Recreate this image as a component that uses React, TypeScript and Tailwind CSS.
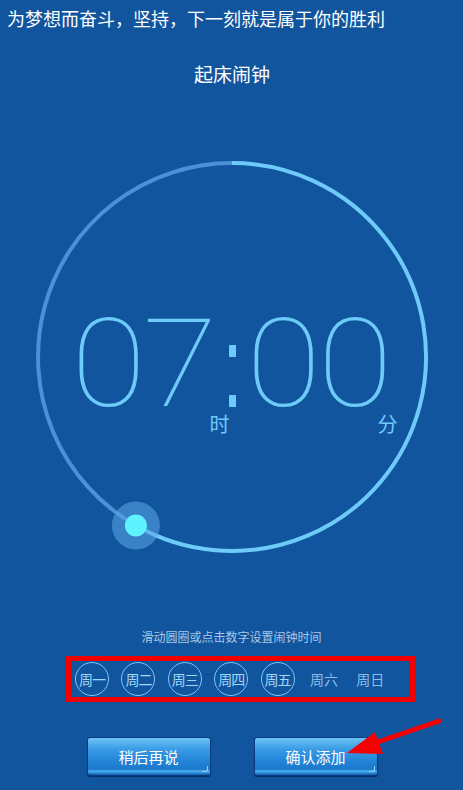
import React from 'react';

const days = [
  { label: '周一', on: true },
  { label: '周二', on: true },
  { label: '周三', on: true },
  { label: '周四', on: true },
  { label: '周五', on: true },
  { label: '周六', on: false },
  { label: '周日', on: false },
];

function GlossButton({ children }: { children: React.ReactNode }) {
  return (
    <button className="relative w-[124px] h-[39px] rounded-[3px] border border-[#0a3b7c] bg-[linear-gradient(180deg,#6cc4f4_0%,#3a9ce6_30%,#2486d8_60%,#1c78cc_84%,#48aef0_90%,#0f5cb0_100%)] shadow-[0_1px_1px_rgba(0,20,60,0.6)] text-white text-[15px] leading-none">
      {children}
      <span className="absolute right-[2px] bottom-[3px] w-[6px] h-[6px] border-r border-b border-[#8fd4fb] rounded-br-[3px]" />
    </button>
  );
}

export default function App() {
  const cjk = { fontFamily: '"Noto Sans CJK SC", "Noto Sans", sans-serif' };
  const digits = { fontFamily: 'Roboto, "Open Sans", sans-serif' };

  return (
    <div
      className="relative w-[463px] h-[790px] overflow-hidden bg-[#11559e] text-white"
      style={cjk}
    >
      {/* Motto */}
      <p className="pl-[7px] pt-[7px] text-[18px] leading-[22px] whitespace-nowrap">
        为梦想而奋斗，坚持，下一刻就是属于你的胜利
      </p>

      {/* Title */}
      <h1 className="mt-[34px] text-center text-[19px] leading-[22px] font-normal pl-[1px]">
        起床闹钟
      </h1>

      {/* Clock dial */}
      <div className="relative mx-auto mt-[72px] w-[400px] h-[400px]">
        <svg viewBox="0 0 400 400" className="absolute inset-0 w-full h-full">
          <path
            d="M 103.9 368.5 A 194 194 0 0 1 200 6"
            fill="none"
            stroke="#4c90d6"
            strokeWidth="4"
          />
          <path
            d="M 200 6 A 194 194 0 1 1 103.9 368.5"
            fill="none"
            stroke="#6ecbf9"
            strokeWidth="4"
          />
          <circle cx="103.9" cy="368.5" r="24" fill="#5aa8e6" fillOpacity="0.55" />
          <circle cx="103.9" cy="368.5" r="11" fill="#5ff2ff" />
        </svg>

        {/* Time readout */}
        <div className="absolute left-0 right-0 top-[162px] flex justify-center items-start text-[#6ecbf9]" style={digits}>
          <div className="w-[130px] flex justify-center">
            <span className="block text-[122px] leading-[92px] font-thin tracking-[-3px] mr-[4px] scale-x-[1.12] whitespace-nowrap">
              07
            </span>
          </div>
          <div className="ml-[19px] mr-[16px] mt-[26px] h-[62px] flex flex-col justify-between">
            <span className="block w-[7px] h-[12px] bg-[#6ecbf9]" />
            <span className="block w-[7px] h-[12px] bg-[#6ecbf9]" />
          </div>
          <div className="w-[131px] flex justify-center">
            <span className="block text-[122px] leading-[92px] font-thin tracking-[-3px] scale-x-[1.12] whitespace-nowrap">
              00
            </span>
          </div>
        </div>
        <span className="absolute left-[178px] top-[256px] text-[20px] leading-[22px] text-[#6ecbf9]">时</span>
        <span className="absolute left-[346px] top-[256px] text-[20px] leading-[22px] text-[#6ecbf9]">分</span>
      </div>

      {/* Hint */}
      <p className="mt-[72px] text-center text-[12px] leading-[16px] text-[#a9c8e8]">
        滑动圆圈或点击数字设置闹钟时间
      </p>

      {/* Weekday picker */}
      <div className="ml-[66px] mt-[11px] w-[349px] h-[46px] border-[5px] border-[#f20000] flex items-center pl-[4px] gap-[12.4px]">
        {days.map((d) => (
          <div
            key={d.label}
            className={
              d.on
                ? 'w-[34px] h-[34px] shrink-0 rounded-full border-[1.5px] border-[#7cc8f2] flex items-center justify-center text-[14px] tracking-[-1px] text-[#a3d6f7]'
                : 'w-[34px] h-[34px] shrink-0 flex items-center justify-center text-[14px] text-[#8fbce6]'
            }
          >
            {d.label}
          </div>
        ))}
      </div>

      {/* Actions */}
      <div className="mt-[35px] flex justify-center gap-[43px] pl-[1px]">
        <GlossButton>稍后再说</GlossButton>
        <GlossButton>确认添加</GlossButton>
      </div>

      {/* Annotation arrow */}
      <svg className="absolute left-0 top-0 pointer-events-none" width="463" height="790">
        <line x1="439" y1="721" x2="372" y2="744" stroke="#f40000" strokeWidth="5" strokeLinecap="round" />
        <polygon points="347,753 375,732 383,754" fill="#f40000" />
      </svg>
    </div>
  );
}
